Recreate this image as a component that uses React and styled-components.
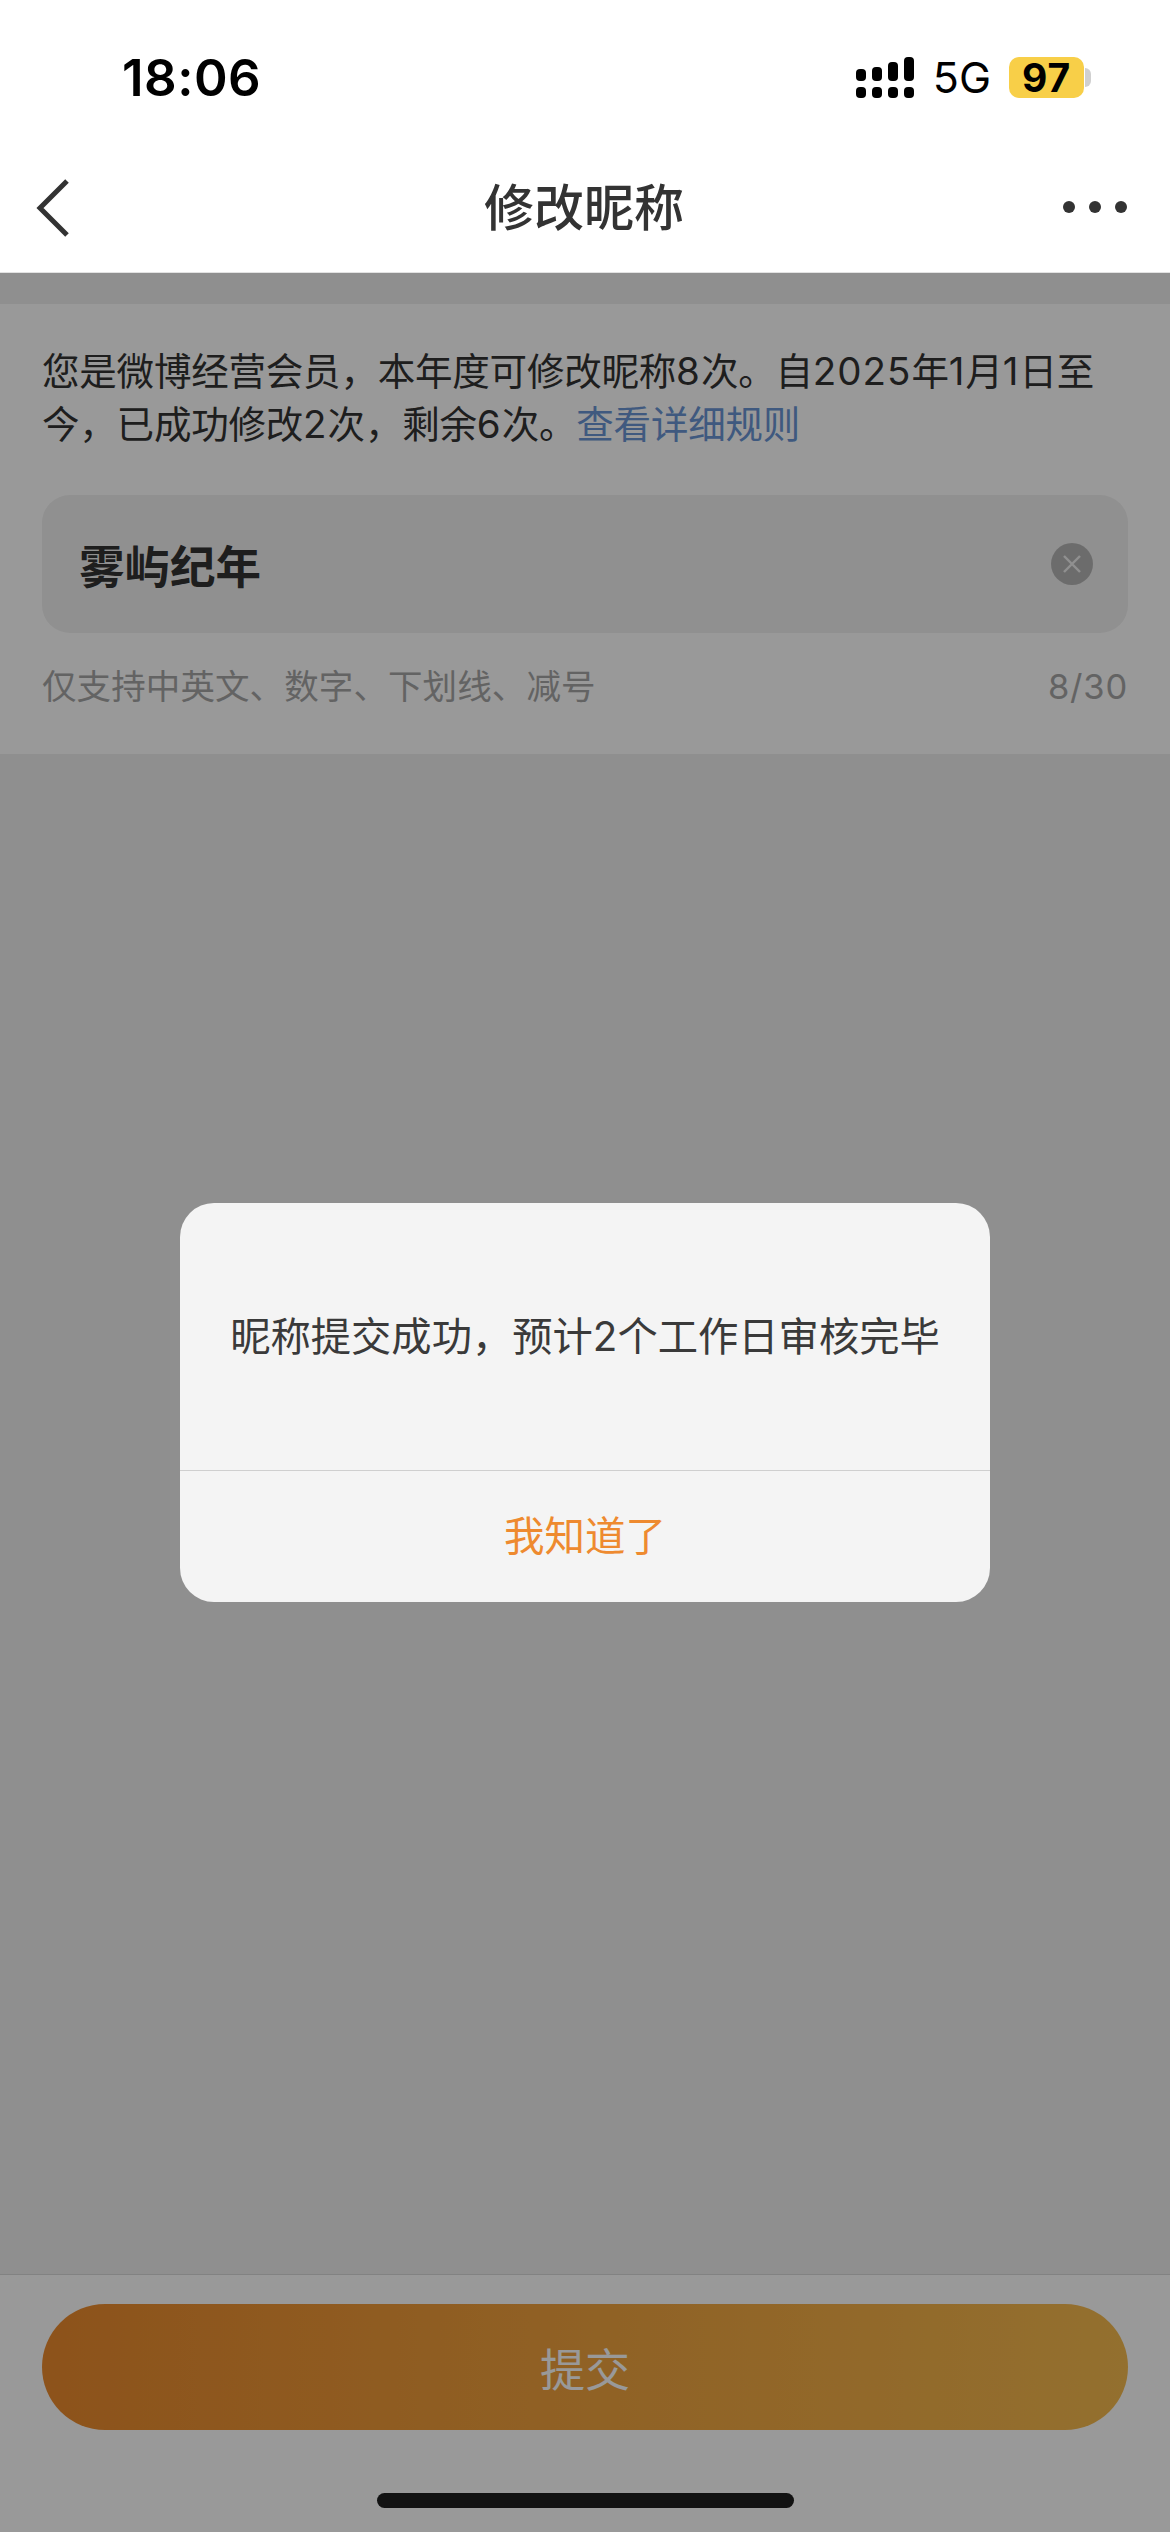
import React from 'react';
import styled, { createGlobalStyle } from 'styled-components';

const GlobalStyle = createGlobalStyle`
  html, body {
    margin: 0;
    padding: 0;
    background: #eeeeee;
  }
  body {
    font-family: "Inter", "Noto Sans CJK SC", sans-serif;
  }
`;

const Page = styled.div`
  position: relative;
  width: 1170px;
  height: 2532px;
  display: flex;
  flex-direction: column;
  overflow: hidden;
  background: #eeeeee;
`;

const StatusBar = styled.div`
  height: 150px;
  padding: 0 79px 0 122px;
  box-sizing: border-box;
  display: flex;
  align-items: center;
  justify-content: space-between;
  background: #fff;
  color: #000;
`;

const Time = styled.div`
  font-size: 51px;
  font-weight: 600;
  letter-spacing: 0.5px;
  margin-top: 4px;
`;

const StatusRight = styled.div`
  display: flex;
  align-items: center;
  margin-top: 5px;
`;

const Network = styled.div`
  font-size: 43px;
  font-weight: 400;
  margin: 0 18px 0 19px;
  line-height: 41px;
`;

const Battery = styled.div`
  width: 75px;
  height: 41px;
  border-radius: 10px;
  background: #f8cf48;
  font-size: 39px;
  font-weight: 700;
  line-height: 41px;
  text-align: center;
  letter-spacing: 1px;
`;

const BatteryNub = styled.div`
  width: 6px;
  height: 19px;
  margin-left: 1px;
  border-radius: 0 10px 10px 0;
  background: #d0d0d0;
`;

const NavBar = styled.div`
  height: 123px;
  padding: 0 43px 6px 36px;
  box-sizing: border-box;
  display: flex;
  align-items: center;
  justify-content: space-between;
  background: #fff;
  border-bottom: 1px solid #e2e2e2;
`;

const NavSide = styled.div`
  width: ${(p) => (p.$end ? '65px' : '70px')};
  margin-bottom: ${(p) => (p.$end ? '2px' : '0')};
  display: flex;
  justify-content: ${(p) => (p.$end ? 'flex-end' : 'flex-start')};
`;

const Title = styled.div`
  font-size: 50px;
  font-weight: 500;
  color: #333;
  line-height: 60px;
`;

const Content = styled.div`
  margin-top: 31px;
  padding: 41px 42px 0;
  height: 450px;
  box-sizing: border-box;
  background: #fff;
`;

const Notice = styled.div`
  font-size: 37.5px;
  line-height: 53px;
  letter-spacing: -0.2px;
  color: #333;
  height: 105px;
  white-space: nowrap;
`;

const Num = styled.span`
  letter-spacing: 1px;
  font-size: 38.5px;
`;

const Link = styled.span`
  color: #6a95d4;
`;

const InputBox = styled.div`
  margin-top: 45px;
  height: 138px;
  padding: 0 35px 0 37px;
  box-sizing: border-box;
  display: flex;
  align-items: center;
  justify-content: space-between;
  background: #f0f0f0;
  border-radius: 28px;
`;

const InputText = styled.div`
  font-size: 45.5px;
  font-weight: 700;
  color: #333;
`;

const ClearButton = styled.div`
  width: 42px;
  height: 42px;
  border-radius: 50%;
  background: #b5b5b5;
  display: flex;
  align-items: center;
  justify-content: center;
`;

const HintRow = styled.div`
  margin-top: 32px;
  display: flex;
  justify-content: space-between;
  font-size: 34.5px;
  line-height: 44px;
  letter-spacing: 0.1px;
  color: #a6a6a6;
`;

const Counter = styled.span`
  letter-spacing: 0.8px;
`;

const Footer = styled.div`
  margin-top: auto;
  height: 258px;
  padding: 29px 42px 0;
  box-sizing: border-box;
  background: #fff;
  border-top: 1px solid #d9d9d9;
`;

const SubmitButton = styled.div`
  height: 126px;
  border-radius: 63px;
  background: linear-gradient(90deg, #eb8a2d, #f6bb4f);
  color: #fff;
  font-size: 45px;
  display: flex;
  align-items: center;
  justify-content: center;
`;

const HomeIndicator = styled.div`
  position: absolute;
  left: 377px;
  bottom: 24px;
  width: 417px;
  height: 15px;
  border-radius: 8px;
  background: #1f1f1f;
`;

const Overlay = styled.div`
  position: absolute;
  left: 0;
  right: 0;
  top: 273px;
  bottom: 0;
  background: rgba(0, 0, 0, 0.4);
  display: flex;
  align-items: center;
  justify-content: center;
`;

const Dialog = styled.div`
  width: 810px;
  height: 399px;
  border-radius: 34px;
  background: #f4f4f4;
  display: flex;
  flex-direction: column;
  overflow: hidden;
`;

const DialogBody = styled.div`
  height: 267px;
  padding-bottom: 6px;
  box-sizing: border-box;
  display: flex;
  align-items: center;
  justify-content: center;
  font-size: 40.3px;
  color: #3a3a3a;
  white-space: nowrap;
`;

const DialogAction = styled.div`
  flex: 1;
  padding-bottom: 6px;
  border-top: 1px solid #cfcfcf;
  display: flex;
  align-items: center;
  justify-content: center;
  font-size: 40.5px;
  color: #ee8a2f;
`;

const SignalIcon = () => (
  <svg width="58" height="41" viewBox="0 0 58 41" fill="#000">
    <rect x="0" y="12" width="10" height="12" rx="4" />
    <rect x="16" y="10" width="10" height="14" rx="4" />
    <rect x="32" y="5" width="10" height="19" rx="4" />
    <rect x="48" y="0" width="10" height="24" rx="4" />
    <rect x="0" y="30" width="10" height="11" rx="4" />
    <rect x="16" y="30" width="10" height="11" rx="4" />
    <rect x="32" y="30" width="10" height="11" rx="4" />
    <rect x="48" y="30" width="10" height="11" rx="4" />
  </svg>
);

const BackIcon = () => (
  <svg width="33" height="58" viewBox="0 0 33 58" fill="none">
    <path d="M31 2 L4 29 L31 56" stroke="#333" strokeWidth="5" />
  </svg>
);

const MoreIcon = () => (
  <svg width="64" height="14" viewBox="0 0 64 14" fill="#333">
    <circle cx="6" cy="7" r="6" />
    <circle cx="32" cy="7" r="6" />
    <circle cx="58" cy="7" r="6" />
  </svg>
);

const ClearIcon = () => (
  <svg width="20" height="20" viewBox="0 0 20 20" fill="none">
    <path d="M2 2 L18 18 M18 2 L2 18" stroke="#f0f0f0" strokeWidth="2.4" />
  </svg>
);

const App = () => {
  return (
    <Page lang="zh-CN">
      <GlobalStyle />
      <StatusBar>
        <Time>18:06</Time>
        <StatusRight>
          <SignalIcon />
          <Network>5G</Network>
          <Battery>97</Battery>
          <BatteryNub />
        </StatusRight>
      </StatusBar>
      <NavBar>
        <NavSide>
          <BackIcon />
        </NavSide>
        <Title>修改昵称</Title>
        <NavSide $end>
          <MoreIcon />
        </NavSide>
      </NavBar>
      <Content>
        <Notice>
          您是微博经营会员，本年度可修改昵称<Num>8</Num>次。自<Num>2025</Num>年<Num>1</Num>月<Num>1</Num>日至
          <br />
          今，已成功修改<Num>2</Num>次，剩余<Num>6</Num>次。<Link>查看详细规则</Link>
        </Notice>
        <InputBox>
          <InputText>雾屿纪年</InputText>
          <ClearButton>
            <ClearIcon />
          </ClearButton>
        </InputBox>
        <HintRow>
          <span>仅支持中英文、数字、下划线、减号</span>
          <Counter>8/30</Counter>
        </HintRow>
      </Content>
      <Footer>
        <SubmitButton>提交</SubmitButton>
      </Footer>
      <HomeIndicator />
      <Overlay>
        <Dialog>
          <DialogBody>昵称提交成功，预计2个工作日审核完毕</DialogBody>
          <DialogAction>我知道了</DialogAction>
        </Dialog>
      </Overlay>
    </Page>
  );
};

export default App;
